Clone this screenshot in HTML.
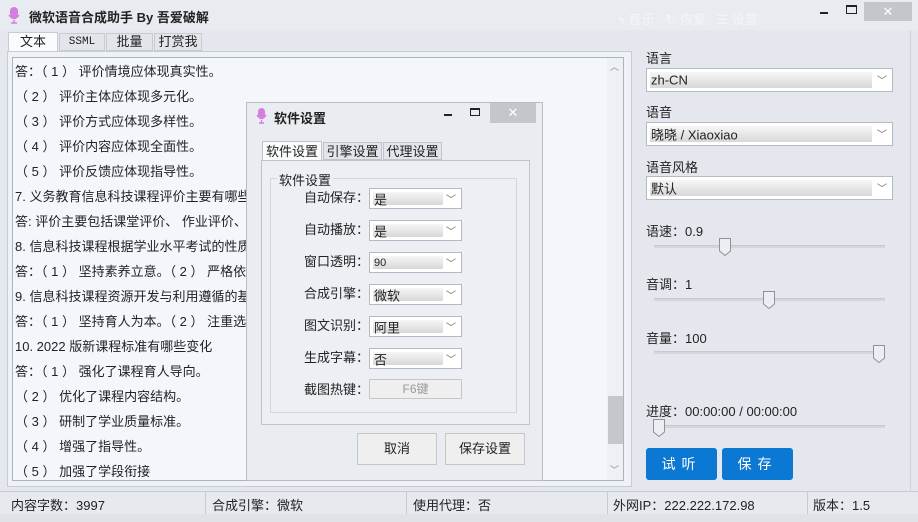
<!DOCTYPE html><html><head><meta charset="utf-8"><style>
*{margin:0;padding:0;box-sizing:border-box}
body{width:918px;height:522px;overflow:hidden;background:#e4e8ee;font-family:"Liberation Sans","Noto Sans CJK SC",sans-serif;font-size:13px;color:#222;position:relative}
.a{position:absolute}
.t{white-space:nowrap}
.combo{position:absolute;border:1px solid #b5b9c0;background:#fff;}
.combo i{position:absolute;left:3px;top:3px;bottom:3px;background:linear-gradient(#f6f6f6,#d8d8d8);}
.combo span{position:absolute;left:4px;top:50%;transform:translateY(-50%);white-space:nowrap}
.combo b{position:absolute;right:5px;top:50%;transform:translateY(-55%);font-weight:normal;color:#666;font-size:10px}
.sl{position:absolute;height:3px;background:#d3d6dc;border-top:1px solid #c7cad0}
.th{position:absolute;width:12px;height:18px;}
.btn{position:absolute;border:1px solid #c4c6ca;background:#efefef;text-align:center}
.blue{position:absolute;background:#0b78d4;color:#fff;border-radius:3px;text-align:center;line-height:32px;font-size:14px;letter-spacing:6px}
</style></head><body>
<!-- title -->
<div class="a" style="left:0;top:0;width:918px;height:30px;background:#e8ebf0"></div>
<svg class="a" style="left:8px;top:7px" width="12" height="17"><rect x="2" y="0" width="8" height="11" rx="4" fill="#d37ee0"/><path d="M1 8 Q6 15 11 8 M6 13 V16 M3 16 H9" stroke="#d37ee0" fill="none" stroke-width="1.5"/></svg>
<div class="a t" style="left:29px;top:7px;font-size:13px;font-weight:bold;color:#222">微软语音合成助手 By 吾爱破解</div>
<div class="a t" style="left:618px;top:9px;color:#f3f5f8;font-size:13px">ϟ 音乐 &nbsp;&nbsp;↻ 恢复 &nbsp;&nbsp;☰ 设置</div>
<div class="a" style="left:820px;top:12px;width:8px;height:2px;background:#222"></div>
<div class="a" style="left:846px;top:5px;width:11px;height:9px;border:1px solid #222;border-top-width:2px"></div>
<div class="a" style="left:864px;top:2px;width:48px;height:19px;background:#c3c6cb;color:#fff;text-align:center;font-size:13px;line-height:19px">✕</div>
<!-- tabs -->
<div class="a" style="left:8px;top:32px;width:50px;height:20px;background:#fafbfc;border:1px solid #c8ccd2;border-bottom:none;text-align:center;line-height:18px">文本</div>
<div class="a" style="left:59px;top:33px;width:46px;height:18px;background:#e2e5ea;border:1px solid #c8ccd2;text-align:center;line-height:16px;font-family:'Liberation Mono',monospace;font-size:11px">SSML</div>
<div class="a" style="left:106px;top:33px;width:47px;height:18px;background:#e2e5ea;border:1px solid #c8ccd2;text-align:center;line-height:16px">批量</div>
<div class="a" style="left:154px;top:33px;width:48px;height:18px;background:#e2e5ea;border:1px solid #c8ccd2;text-align:center;line-height:16px">打赏我</div>
<div class="a" style="left:7px;top:51px;width:625px;height:436px;border:1px solid #c8ccd2;background:#eef1f5"></div>
<div class="a" style="left:12px;top:57px;width:612px;height:424px;border:1px solid #aeb3ba;background:#f3f7fc"></div>
<div class="a" style="left:607px;top:58px;width:16px;height:422px;background:#eef1f4"></div>
<div class="a" style="left:608px;top:396px;width:15px;height:48px;background:#c4c7cc"></div>
<div class="a t" style="left:610px;top:60px;font-size:9px;color:#888">︿</div>
<div class="a t" style="left:610px;top:463px;font-size:9px;color:#888">﹀</div>
<div class="a t" style="left:15px;top:59px;line-height:25px;font-size:13px;color:#222;white-space:pre">答：（ 1 ） 评价情境应体现真实性。
（ 2 ） 评价主体应体现多元化。
（ 3 ） 评价方式应体现多样性。
（ 4 ） 评价内容应体现全面性。
（ 5 ） 评价反馈应体现指导性。
7. 义务教育信息科技课程评价主要有哪些
答: 评价主要包括课堂评价、 作业评价、
8. 信息科技课程根据学业水平考试的性质
答：（ 1 ） 坚持素养立意。（ 2 ） 严格依
9. 信息科技课程资源开发与利用遵循的基
答：（ 1 ） 坚持育人为本。（ 2 ） 注重选
10. 2022 版新课程标准有哪些变化
答：（ 1 ） 强化了课程育人导向。
（ 2 ） 优化了课程内容结构。
（ 3 ） 研制了学业质量标准。
（ 4 ） 增强了指导性。
（ 5 ） 加强了学段衔接</div>
<!-- dialog -->
<div class="a" style="left:246px;top:102px;width:297px;height:379px;background:#e9ecf0;border:1px solid #b8bcc2"></div>
<svg class="a" style="left:256px;top:108px" width="11" height="16"><rect x="2" y="0" width="7" height="10" rx="3.5" fill="#d37ee0"/><path d="M1 7 Q5.5 14 10 7 M5.5 12 V15 M3 15 H8" stroke="#d37ee0" fill="none" stroke-width="1.4"/></svg>
<div class="a t" style="left:274px;top:108px;font-weight:bold">软件设置</div>
<div class="a" style="left:444px;top:114px;width:8px;height:2px;background:#222"></div>
<div class="a" style="left:470px;top:108px;width:10px;height:8px;border:1px solid #222;border-top-width:2px"></div>
<div class="a" style="left:490px;top:103px;width:46px;height:20px;background:#c3c6cb;color:#fff;text-align:center;line-height:20px">✕</div>
<div class="a" style="left:262px;top:141px;width:60px;height:20px;background:#fafbfc;border:1px solid #c0c4ca;border-bottom:none;text-align:center;line-height:19px">软件设置</div>
<div class="a" style="left:323px;top:142px;width:59px;height:18px;background:#e2e5ea;border:1px solid #c0c4ca;text-align:center;line-height:17px">引擎设置</div>
<div class="a" style="left:383px;top:142px;width:59px;height:18px;background:#e2e5ea;border:1px solid #c0c4ca;text-align:center;line-height:17px">代理设置</div>
<div class="a" style="left:261px;top:160px;width:269px;height:265px;border:1px solid #c0c4ca;background:#eceff3"></div>
<div class="a" style="left:270px;top:178px;width:247px;height:235px;border:1px solid #d2d5da"></div>
<div class="a t" style="left:277px;top:170px;background:#eceff3;padding:0 2px">软件设置</div>
<div class="a t" style="left:304px;top:182px;line-height:32px;text-align:right">自动保存：<br>自动播放：<br>窗口透明：<br>合成引擎：<br>图文识别：<br>生成字幕：<br>截图热键：</div>
<div class="combo" style="left:369px;top:188px;width:93px;height:21px"><i style="right:18px"></i><span>是</span><b>﹀</b></div>
<div class="combo" style="left:369px;top:220px;width:93px;height:21px"><i style="right:18px"></i><span>是</span><b>﹀</b></div>
<div class="combo" style="left:369px;top:252px;width:93px;height:21px"><i style="right:18px"></i><span style="font-size:11px">90</span><b>﹀</b></div>
<div class="combo" style="left:369px;top:284px;width:93px;height:21px"><i style="right:18px"></i><span>微软</span><b>﹀</b></div>
<div class="combo" style="left:369px;top:316px;width:93px;height:21px"><i style="right:18px"></i><span>阿里</span><b>﹀</b></div>
<div class="combo" style="left:369px;top:348px;width:93px;height:21px"><i style="right:18px"></i><span>否</span><b>﹀</b></div>
<div class="btn" style="left:369px;top:379px;width:93px;height:20px;color:#999;font-size:12px;line-height:18px">F6键</div>
<div class="btn" style="left:357px;top:433px;width:80px;height:32px;line-height:30px">取消</div>
<div class="btn" style="left:445px;top:433px;width:80px;height:32px;line-height:30px">保存设置</div>
<!-- right panel -->
<div class="a t" style="left:646px;top:48px">语言</div>
<div class="combo" style="left:646px;top:68px;width:247px;height:24px"><i style="right:20px"></i><span>zh-CN</span><b>﹀</b></div>
<div class="a t" style="left:646px;top:102px">语音</div>
<div class="combo" style="left:646px;top:122px;width:247px;height:24px"><i style="right:20px"></i><span>晓晓 / Xiaoxiao</span><b>﹀</b></div>
<div class="a t" style="left:646px;top:157px">语音风格</div>
<div class="combo" style="left:646px;top:176px;width:247px;height:24px"><i style="right:20px"></i><span>默认</span><b>﹀</b></div>
<div class="a t" style="left:646px;top:221px">语速：0.9</div>
<div class="sl" style="left:654px;top:245px;width:231px"></div>
<svg class="th" style="left:719px;top:238px"><path d="M.5 .5H11.5V13L6 17.5 .5 13Z" fill="#eceef1" stroke="#8e939a"/></svg>
<div class="a t" style="left:646px;top:274px">音调：1</div>
<div class="sl" style="left:654px;top:298px;width:231px"></div>
<svg class="th" style="left:763px;top:291px"><path d="M.5 .5H11.5V13L6 17.5 .5 13Z" fill="#eceef1" stroke="#8e939a"/></svg>
<div class="a t" style="left:646px;top:328px">音量：100</div>
<div class="sl" style="left:654px;top:351px;width:231px"></div>
<svg class="th" style="left:873px;top:345px"><path d="M.5 .5H11.5V13L6 17.5 .5 13Z" fill="#eceef1" stroke="#8e939a"/></svg>
<div class="a t" style="left:646px;top:401px">进度：00:00:00 / 00:00:00</div>
<div class="sl" style="left:654px;top:425px;width:231px"></div>
<svg class="th" style="left:653px;top:419px"><path d="M.5 .5H11.5V13L6 17.5 .5 13Z" fill="#eceef1" stroke="#8e939a"/></svg>
<div class="blue" style="left:646px;top:448px;width:71px;height:32px">试听</div>
<div class="blue" style="left:722px;top:448px;width:71px;height:32px">保存</div>
<div class="a" style="left:910px;top:30px;width:1px;height:462px;background:#cfd3d8"></div>
<!-- status -->
<div class="a" style="left:0;top:491px;width:918px;height:1px;background:#c8ccd2"></div>
<div class="a" style="left:0;top:492px;width:918px;height:22px;background:#e6e9ee"></div>
<div class="a" style="left:0;top:514px;width:918px;height:8px;background:#dfe3e8"></div>
<div class="a" style="left:205px;top:492px;width:1px;height:22px;background:#c8ccd2"></div>
<div class="a" style="left:406px;top:492px;width:1px;height:22px;background:#c8ccd2"></div>
<div class="a" style="left:607px;top:492px;width:1px;height:22px;background:#c8ccd2"></div>
<div class="a" style="left:807px;top:492px;width:1px;height:22px;background:#c8ccd2"></div>
<div class="a t" style="left:11px;top:495px">内容字数：3997</div>
<div class="a t" style="left:212px;top:495px">合成引擎：微软</div>
<div class="a t" style="left:413px;top:495px">使用代理：否</div>
<div class="a t" style="left:613px;top:495px">外网IP：222.222.172.98</div>
<div class="a t" style="left:813px;top:495px">版本：1.5</div>
</body></html>
